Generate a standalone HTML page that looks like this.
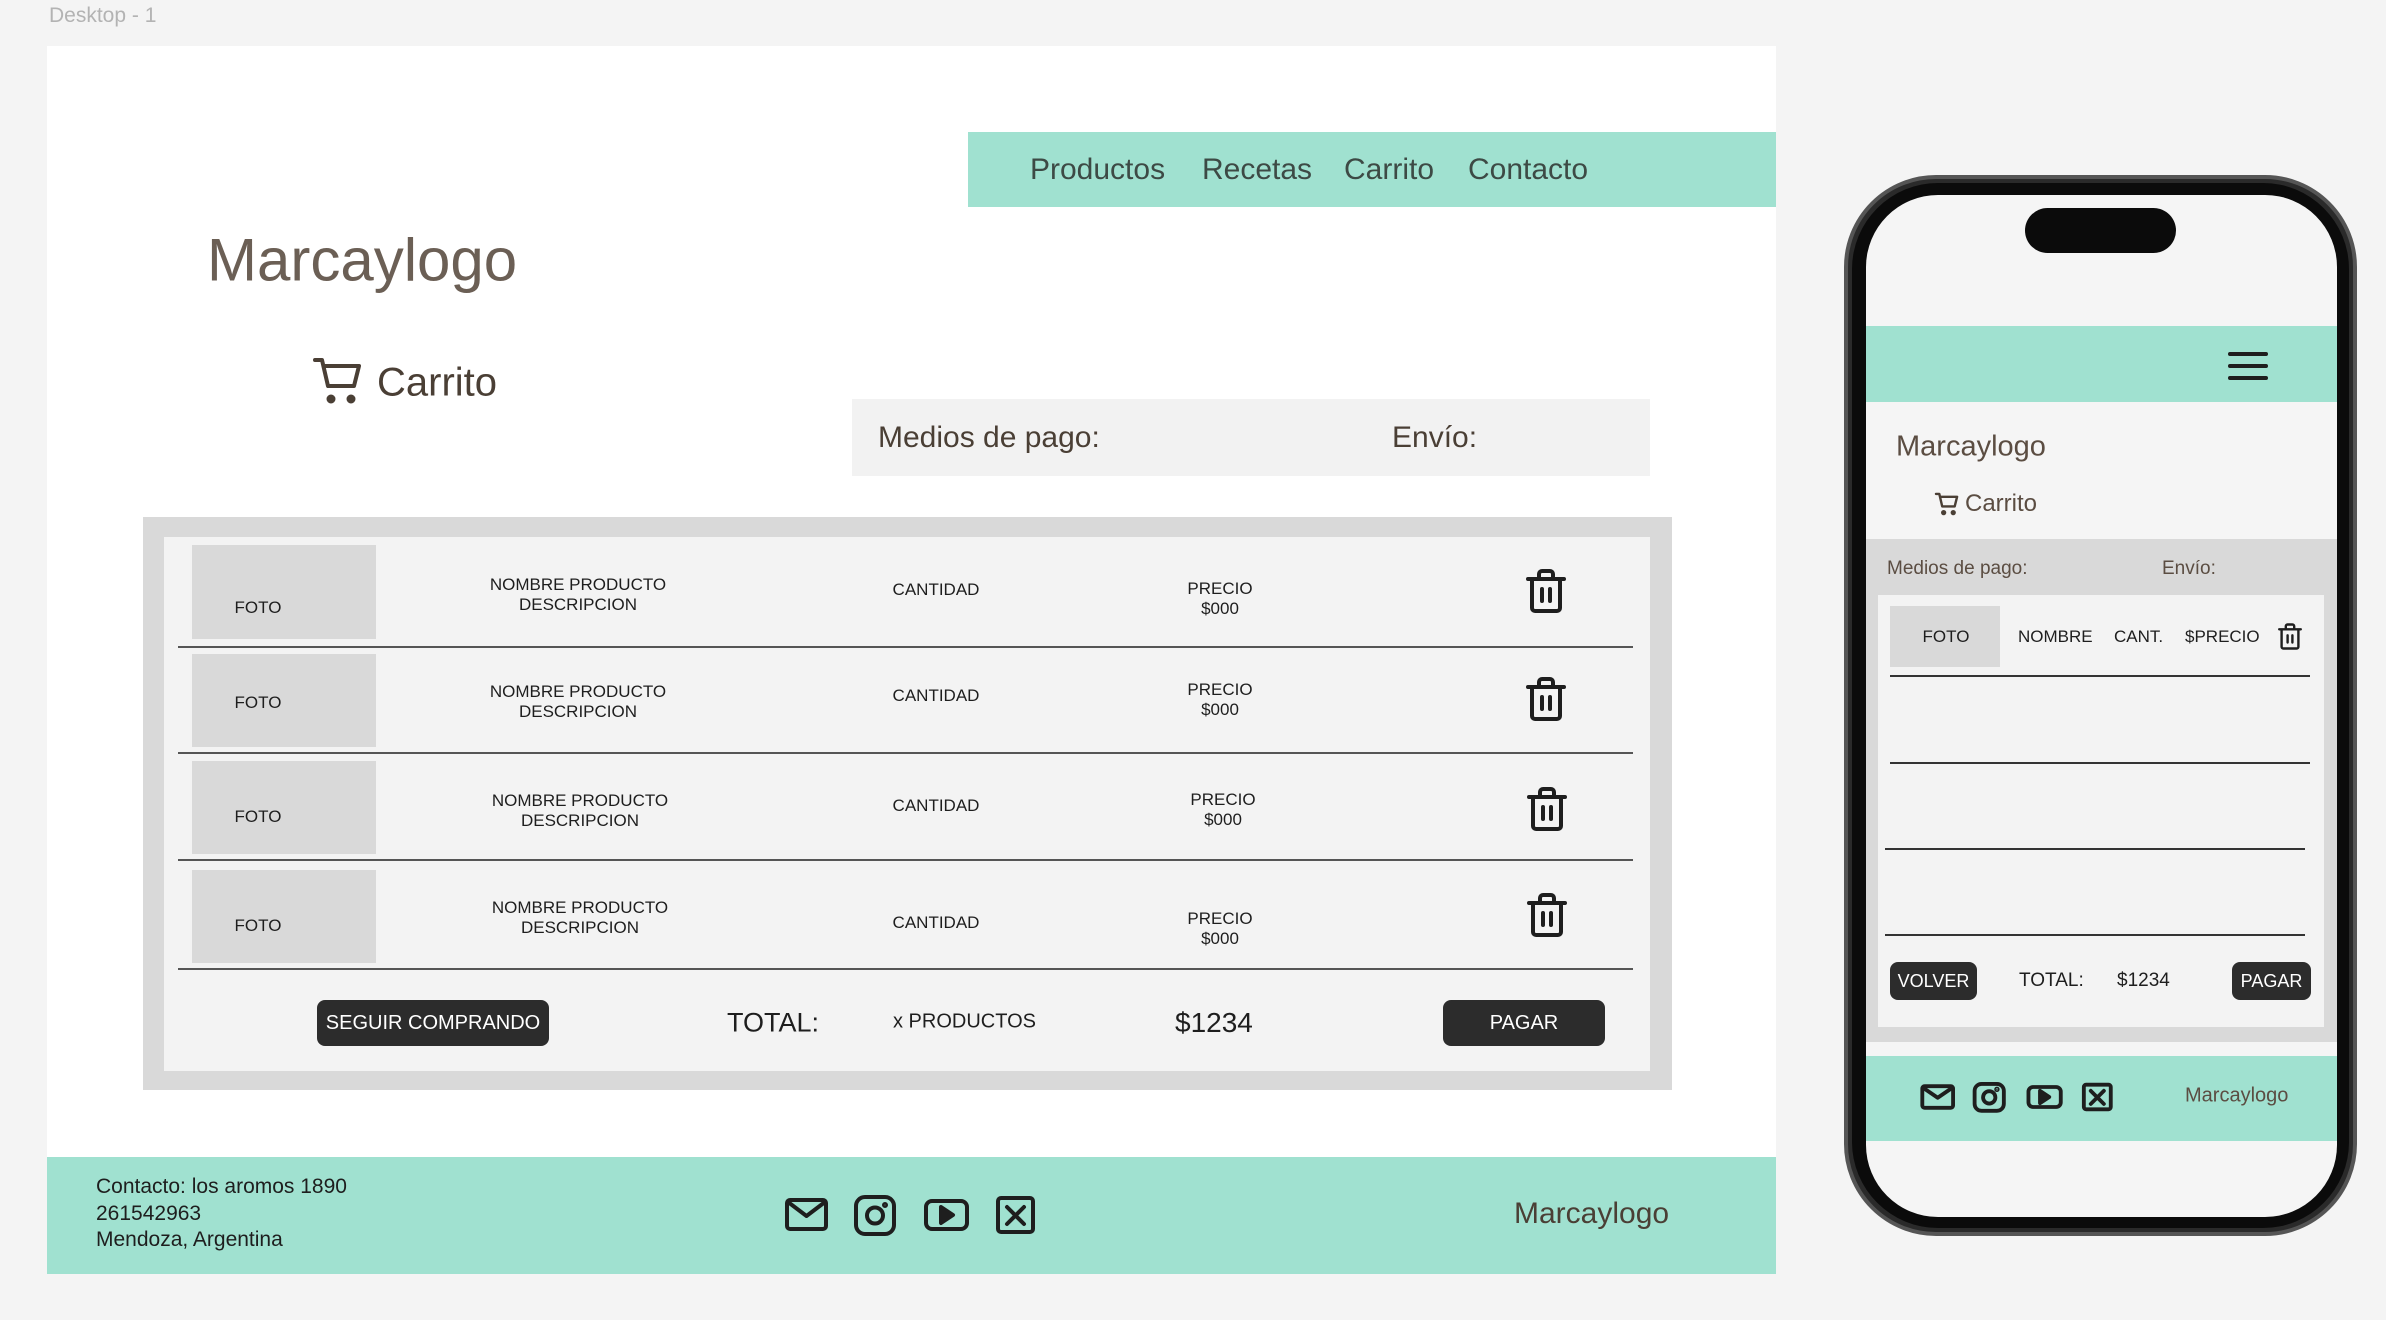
<!DOCTYPE html>
<html><head><meta charset="utf-8">
<style>
*{margin:0;padding:0;box-sizing:border-box}
body{width:2386px;height:1320px;background:#f4f4f4;position:relative;overflow:hidden;font-family:"Liberation Sans",sans-serif;color:#1e1e1e}
.a{position:absolute;white-space:nowrap}
.c{transform:translateX(-50%);text-align:center}
.m{transform:translateY(-50%)}
.cm{transform:translate(-50%,-50%);text-align:center}
.brown{color:#5b4d42}
.btn{position:absolute;background:#2c2c2c;color:#fff;border-radius:8px;display:flex;align-items:center;justify-content:center;font-size:20px}
.line{position:absolute;height:2px;background:#555}
.foto{position:absolute;background:#d9d9d9}
.sm{font-size:17px;line-height:20px}
.ph{font-family:"DejaVu Sans",sans-serif}
</style></head><body>
<div class="a" style="left:49px;top:4px;font-size:21px;color:#b3b3b3">Desktop - 1</div>
<div class="a" style="left:47px;top:46px;width:1729px;height:1228px;background:#fff"></div>
<!-- nav -->
<div class="a" style="left:968px;top:132px;width:808px;height:75px;background:#a0e1d0"></div>
<div class="a m" style="left:1030px;top:170px;font-size:30px;color:#3d4a45">Productos</div>
<div class="a m" style="left:1202px;top:170px;font-size:30px;color:#3d4a45">Recetas</div>
<div class="a m" style="left:1344px;top:170px;font-size:30px;color:#3d4a45">Carrito</div>
<div class="a m" style="left:1468px;top:170px;font-size:30px;color:#3d4a45">Contacto</div>
<div class="a m" style="left:207px;top:260px;font-size:60px;color:#6b5f55">Marcaylogo</div>
<svg class="a" style="left:312px;top:356px" width="52" height="50" viewBox="0 0 52 50" fill="none" stroke="#4a3f35" stroke-width="4" stroke-linecap="round" stroke-linejoin="round"><path d="M3 4h7l6 26h26l5-20H13"/><circle cx="19" cy="43" r="2.5" fill="#4a3f35"/><circle cx="39" cy="43" r="2.5" fill="#4a3f35"/></svg>
<div class="a m brown" style="left:377px;top:383px;font-size:40px;color:#4a3f35">Carrito</div>
<div class="a" style="left:852px;top:399px;width:798px;height:77px;background:#f2f2f2"></div>
<div class="a m" style="left:878px;top:438px;font-size:30px;color:#4a3f35">Medios de pago:</div>
<div class="a m" style="left:1392px;top:438px;font-size:30px;color:#4a3f35">Envío:</div>
<!-- table -->
<div class="a" style="left:143px;top:517px;width:1529px;height:573px;background:#d9d9d9"></div>
<div class="a" style="left:164px;top:537px;width:1486px;height:534px;background:#f3f3f3"></div>

<div class="foto" style="left:192px;top:545px;width:184px;height:94px"></div>
<div class="foto" style="left:192px;top:654px;width:184px;height:93px"></div>
<div class="foto" style="left:192px;top:761px;width:184px;height:93px"></div>
<div class="foto" style="left:192px;top:870px;width:184px;height:93px"></div>
<div class="line" style="left:178px;top:646px;width:1455px"></div>
<div class="line" style="left:178px;top:752px;width:1455px"></div>
<div class="line" style="left:178px;top:859px;width:1455px"></div>
<div class="line" style="left:178px;top:968px;width:1455px"></div>

<div class="a cm sm" style="left:258px;top:608px">FOTO</div>
<div class="a cm sm" style="left:258px;top:703px">FOTO</div>
<div class="a cm sm" style="left:258px;top:817px">FOTO</div>
<div class="a cm sm" style="left:258px;top:926px">FOTO</div>

<div class="a cm sm" style="left:578px;top:595px">NOMBRE PRODUCTO<br>DESCRIPCION</div>
<div class="a cm sm" style="left:578px;top:702px">NOMBRE PRODUCTO<br>DESCRIPCION</div>
<div class="a cm sm" style="left:580px;top:811px">NOMBRE PRODUCTO<br>DESCRIPCION</div>
<div class="a cm sm" style="left:580px;top:918px">NOMBRE PRODUCTO<br>DESCRIPCION</div>

<div class="a cm sm" style="left:936px;top:590px">CANTIDAD</div>
<div class="a cm sm" style="left:936px;top:696px">CANTIDAD</div>
<div class="a cm sm" style="left:936px;top:806px">CANTIDAD</div>
<div class="a cm sm" style="left:936px;top:923px">CANTIDAD</div>

<div class="a cm sm" style="left:1220px;top:599px">PRECIO<br>$000</div>
<div class="a cm sm" style="left:1220px;top:700px">PRECIO<br>$000</div>
<div class="a cm sm" style="left:1223px;top:810px">PRECIO<br>$000</div>
<div class="a cm sm" style="left:1220px;top:929px">PRECIO<br>$000</div>

<svg width="0" height="0" style="position:absolute"><defs><g id="tr" fill="none" stroke="#1e1e1e" stroke-width="4" stroke-linecap="round" stroke-linejoin="round"><path d="M2 10h36M13 10V5a3 3 0 0 1 3-3h8a3 3 0 0 1 3 3v5M6 10v29a3 3 0 0 0 3 3h22a3 3 0 0 0 3-3V10M16 20v12M24 20v12"/></g></defs></svg>
<svg class="a" style="left:1526px;top:568px" width="40" height="46" viewBox="0 0 40 44"><use href="#tr"/></svg>
<svg class="a" style="left:1526px;top:676px" width="40" height="46" viewBox="0 0 40 44"><use href="#tr"/></svg>
<svg class="a" style="left:1527px;top:786px" width="40" height="46" viewBox="0 0 40 44"><use href="#tr"/></svg>
<svg class="a" style="left:1527px;top:892px" width="40" height="46" viewBox="0 0 40 44"><use href="#tr"/></svg>

<div class="btn" style="left:317px;top:1000px;width:232px;height:46px">SEGUIR COMPRANDO</div>
<div class="a m" style="left:727px;top:1023px;font-size:27px">TOTAL:</div>
<div class="a m" style="left:893px;top:1022px;font-size:20px">x PRODUCTOS</div>
<div class="a m" style="left:1175px;top:1023px;font-size:28px">$1234</div>
<div class="btn" style="left:1443px;top:1000px;width:162px;height:46px">PAGAR</div>
<!-- footer -->
<div class="a" style="left:47px;top:1157px;width:1729px;height:117px;background:#a0e1d0"></div>
<div class="a" style="left:96px;top:1174px;font-size:21px;line-height:26.5px">Contacto: los aromos 1890<br>261542963<br>Mendoza, Argentina</div>
<svg class="a" style="left:785px;top:1194px" width="260" height="42" viewBox="0 0 260 42" fill="none" stroke="#1e1e1e" stroke-width="4" stroke-linejoin="round" stroke-linecap="round">
<rect x="2" y="6" width="39" height="29" rx="3"/><path d="M3 8l18.5 14L40 8"/>
<rect x="71" y="3" width="38" height="37" rx="9"/><circle cx="90" cy="21.5" r="8"/><circle cx="100" cy="11" r="1" fill="#1e1e1e"/>
<rect x="141" y="7" width="41" height="28" rx="6"/><path d="M156 13l12 8-12 8z" fill="#1e1e1e"/>
<rect x="213" y="4" width="35" height="34" rx="3"/><path d="M222 13l17 17M239 13l-17 17"/>
</svg>
<div class="a m" style="left:1514px;top:1214px;font-size:30px;color:#4a3f35">Marcaylogo</div>

<!-- phone -->
<div class="a" style="left:1844px;top:175px;width:513px;height:1061px;border-radius:92px;background:#2a2a2a;border:4px solid #555"></div>
<div class="a" style="left:1852px;top:183px;width:497px;height:1045px;border-radius:86px;background:#0b0b0b"></div>
<div class="a" style="left:1866px;top:195px;width:471px;height:1022px;border-radius:72px;background:#f5f5f5;overflow:hidden">
  <div class="a" style="left:0;top:131px;width:471px;height:76px;background:#a0e1d0"></div>
  <div class="a" style="left:0;top:344px;width:471px;height:503px;background:#d9d9d9"></div>
  <div class="a" style="left:0;top:861px;width:471px;height:85px;background:#a0e1d0"></div>
</div>
<div class="a" style="left:2025px;top:208px;width:151px;height:45px;border-radius:23px;background:#0b0b0b"></div>
<div class="a" style="left:2228px;top:352px;width:40px;height:4px;background:#1e1e1e;border-radius:2px"></div>
<div class="a" style="left:2228px;top:364px;width:40px;height:4px;background:#1e1e1e;border-radius:2px"></div>
<div class="a" style="left:2228px;top:376px;width:40px;height:4px;background:#1e1e1e;border-radius:2px"></div>
<div class="a m" style="left:1896px;top:447px;font-size:29px;color:#5b4d42">Marcaylogo</div>
<svg class="a" style="left:1934px;top:492px" width="26" height="24" viewBox="0 0 52 50" fill="none" stroke="#4a3f35" stroke-width="5" stroke-linecap="round" stroke-linejoin="round"><path d="M3 4h7l6 26h26l5-20H13"/><circle cx="19" cy="43" r="3" fill="#4a3f35"/><circle cx="39" cy="43" r="3" fill="#4a3f35"/></svg>
<div class="a m" style="left:1965px;top:504px;font-size:24px;color:#5b4d42">Carrito</div>
<div class="a m" style="left:1887px;top:569px;font-size:19px;color:#5b4d42">Medios de pago:</div>
<div class="a m" style="left:2162px;top:569px;font-size:19px;color:#5b4d42">Envío:</div>
<div class="a" style="left:1878px;top:595px;width:446px;height:432px;background:#f3f3f3"></div>
<div class="foto" style="left:1890px;top:606px;width:110px;height:61px"></div>
<div class="a cm" style="left:1946px;top:637px;font-size:17px">FOTO</div>
<div class="a m" style="left:2018px;top:637px;font-size:17px">NOMBRE</div>
<div class="a m" style="left:2114px;top:637px;font-size:17px">CANT.</div>
<div class="a m" style="left:2185px;top:637px;font-size:17px">$PRECIO</div>
<svg class="a" style="left:2278px;top:623px" width="24" height="27" viewBox="0 0 40 44"><use href="#tr"/></svg>
<div class="a" style="left:1890px;top:675px;width:420px;height:2px;background:#333"></div>
<div class="a" style="left:1890px;top:762px;width:420px;height:2px;background:#333"></div>
<div class="a" style="left:1885px;top:848px;width:420px;height:2px;background:#333"></div>
<div class="a" style="left:1885px;top:934px;width:420px;height:2px;background:#333"></div>
<div class="btn" style="left:1890px;top:962px;width:87px;height:38px;font-size:18px">VOLVER</div>
<div class="a m" style="left:2019px;top:981px;font-size:19px">TOTAL:</div>
<div class="a m" style="left:2117px;top:981px;font-size:19px">$1234</div>
<div class="btn" style="left:2232px;top:962px;width:79px;height:38px;font-size:18px">PAGAR</div>
<svg class="a" style="left:1920px;top:1080px" width="200" height="34" viewBox="0 0 260 42" fill="none" stroke="#1e1e1e" stroke-width="5" stroke-linejoin="round" stroke-linecap="round">
<rect x="3" y="7" width="40" height="28" rx="3"/><path d="M4 9l19 13L42 9"/>
<rect x="71" y="4" width="38" height="35" rx="9"/><circle cx="90" cy="21.5" r="8"/><circle cx="100" cy="11" r="1" fill="#1e1e1e"/>
<rect x="141" y="8" width="42" height="26" rx="6"/><path d="M156 13l12 8-12 8z" fill="#1e1e1e"/>
<rect x="213" y="5" width="35" height="32" rx="3"/><path d="M222 13l17 17M239 13l-17 17"/>
</svg>
<div class="a m" style="left:2185px;top:1096px;font-size:20px;color:#5b4d42">Marcaylogo</div>
</body></html>
